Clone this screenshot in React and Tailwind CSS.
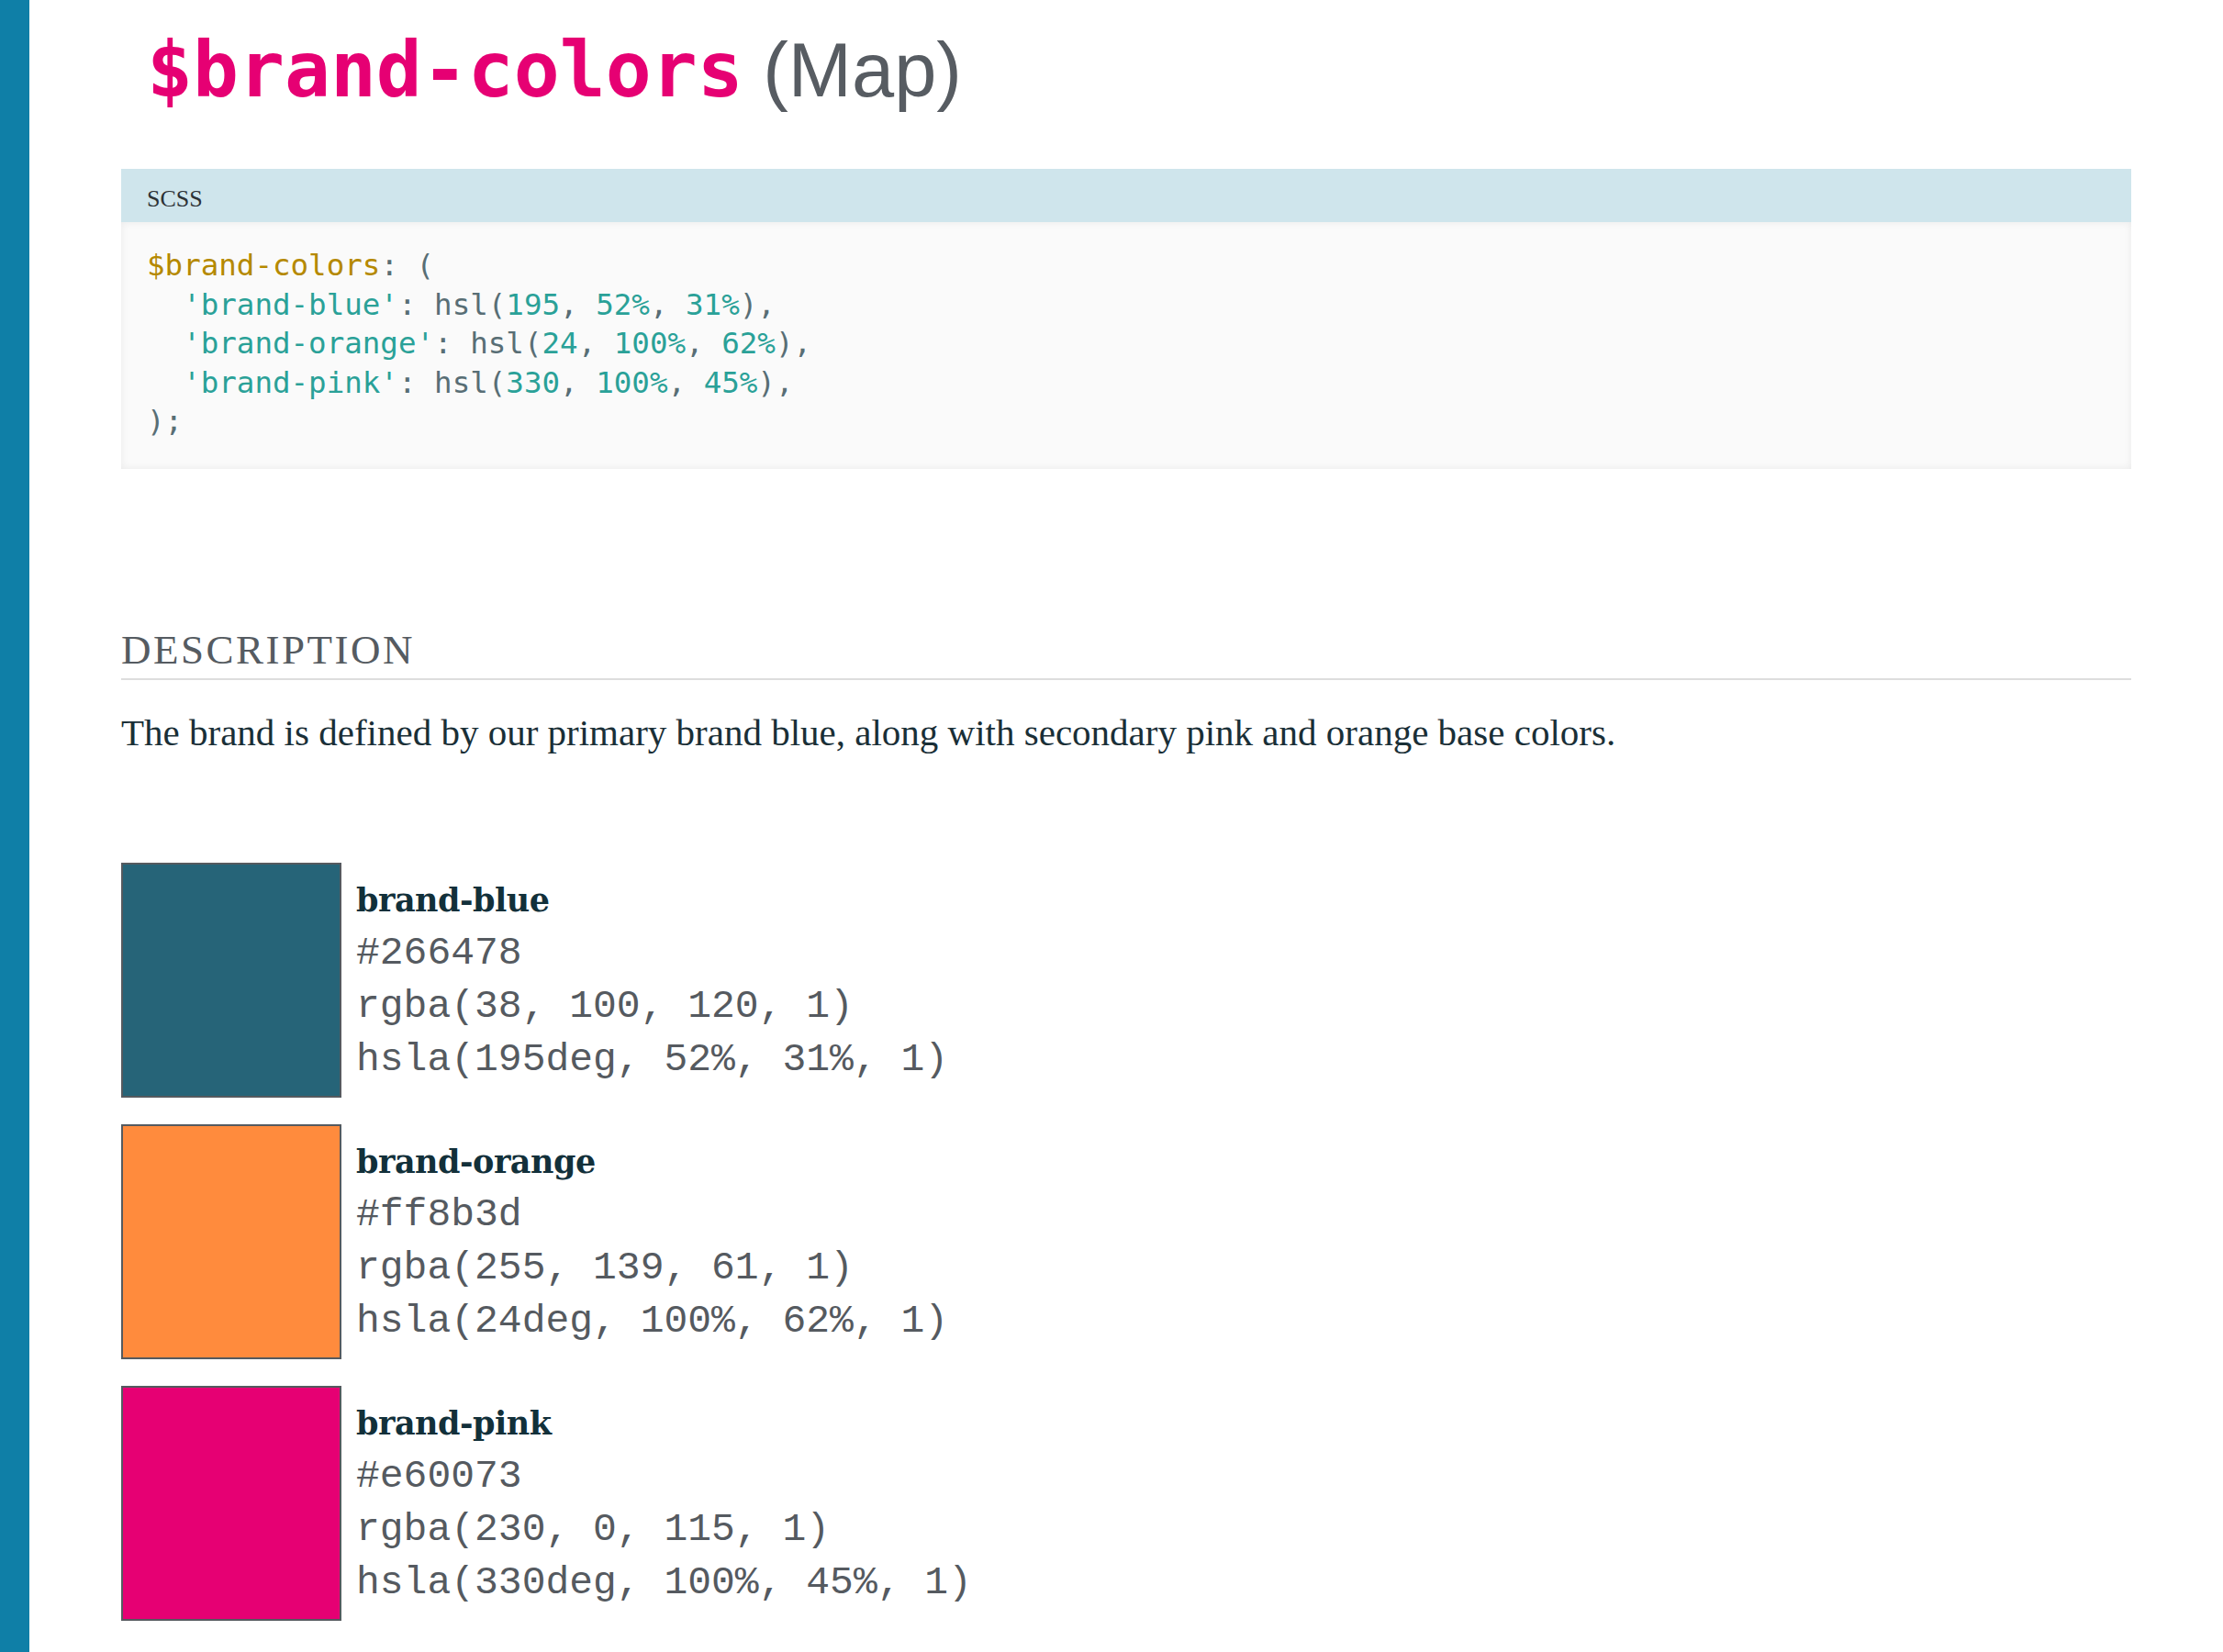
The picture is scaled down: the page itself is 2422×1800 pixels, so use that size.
import React from "react";

const mono = { fontFamily: '"DejaVu Sans Mono", monospace' };

const G = ({ children }) => <span className="text-[#586e75]">{children}</span>;
const T = ({ children }) => <span className="text-[#2aa198]">{children}</span>;
const Y = ({ children }) => <span className="text-[#b58900]">{children}</span>;

const swatches = [
  {
    name: "brand-blue",
    bg: "bg-[#266478]",
    hex: "#266478",
    rgba: "rgba(38, 100, 120, 1)",
    hsla: "hsla(195deg, 52%, 31%, 1)",
  },
  {
    name: "brand-orange",
    bg: "bg-[#ff8b3d]",
    hex: "#ff8b3d",
    rgba: "rgba(255, 139, 61, 1)",
    hsla: "hsla(24deg, 100%, 62%, 1)",
  },
  {
    name: "brand-pink",
    bg: "bg-[#e60073]",
    hex: "#e60073",
    rgba: "rgba(230, 0, 115, 1)",
    hsla: "hsla(330deg, 100%, 45%, 1)",
  },
];

function Swatch({ s }) {
  return (
    <div className="flex items-start gap-[16px]">
      <div className={`w-[240px] h-[256px] shrink-0 border-2 border-[#555a5f] ${s.bg}`} />
      <div className="pt-[12px]">
        <div className="font-['DejaVu_Serif',serif] font-bold text-[35px] leading-[58px] text-[#12303a] tracking-[-0.5px]">
          {s.name}
        </div>
        <div className="font-['Liberation_Mono',monospace] text-[43px] leading-[58px] text-[#555a60]">
          <div>{s.hex}</div>
          <div>{s.rgba}</div>
          <div>{s.hsla}</div>
        </div>
      </div>
    </div>
  );
}

export default function App() {
  return (
    <div className="flex min-h-[1800px] bg-white">
      <div className="w-[32px] shrink-0 bg-[#0f7fa7]" />
      <div className="flex-1 px-[100px]">
        <h1 className="pl-[28px] mt-[23px] leading-[100px] text-[83px] whitespace-nowrap">
          <span style={mono} className="font-bold text-[#e60073]">$brand-colors</span>{" "}
          <span className="font-['Liberation_Sans',sans-serif] font-normal text-[#575c62]">(Map)</span>
        </h1>

        <div className="mt-[57px]">
          <div className="h-[58px] bg-[#cfe5ec] pl-[28px] pt-[20px]">
            <div className="font-['Liberation_Serif',serif] text-[26px] leading-[26px] text-[#2d3236]">SCSS</div>
          </div>
          <div
            className="bg-[#fafafa] pl-[28px] pt-[26px] pb-[30px] text-[32.5px] leading-[42.5px] whitespace-pre shadow-[inset_0_0_8px_rgba(0,0,0,0.07)]"
            style={mono}
          >
            <div><Y>$brand-colors</Y><G>: (</G></div>
            <div>{"  "}<T>'brand-blue'</T><G>: hsl(</G><T>195</T><G>, </G><T>52%</T><G>, </G><T>31%</T><G>),</G></div>
            <div>{"  "}<T>'brand-orange'</T><G>: hsl(</G><T>24</T><G>, </G><T>100%</T><G>, </G><T>62%</T><G>),</G></div>
            <div>{"  "}<T>'brand-pink'</T><G>: hsl(</G><T>330</T><G>, </G><T>100%</T><G>, </G><T>45%</T><G>),</G></div>
            <div><G>);</G></div>
          </div>
        </div>

        <h2 className="mt-[175px] font-['Liberation_Serif',serif] text-[45px] leading-[45px] tracking-[2.5px] text-[#555b61] font-normal">
          DESCRIPTION
        </h2>
        <div className="mt-[8px] h-[2px] bg-[#dddddd]" />
        <p className="mt-[37px] font-['Liberation_Serif',serif] text-[41px] leading-[40px] text-[#1a2f37]">
          The brand is defined by our primary brand blue, along with secondary pink and orange base colors.
        </p>

        <div className="mt-[122px] flex flex-col gap-[29px]">
          {swatches.map((s) => (
            <Swatch key={s.name} s={s} />
          ))}
        </div>
      </div>
    </div>
  );
}
